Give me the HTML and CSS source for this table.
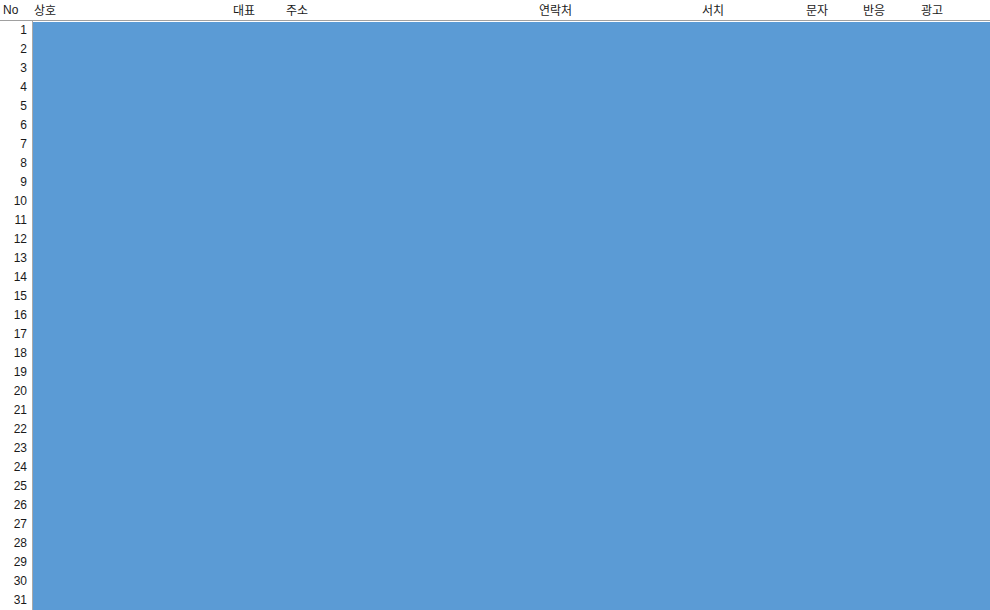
FILE: index.html
```html
<!DOCTYPE html>
<html lang="ko">
<head>
<meta charset="utf-8">
<link rel="stylesheet" href="styles.css">
</head>
<body>
<div class="sheet">
  <div class="head">
    <span class="h h-no">No</span>
    <span class="h h-name">상호</span>
    <span class="h h-rep">대표</span>
    <span class="h h-addr">주소</span>
    <span class="h h-tel">연락처</span>
    <span class="h h-search">서치</span>
    <span class="h h-sms">문자</span>
    <span class="h h-resp">반응</span>
    <span class="h h-ad">광고</span>
  </div>
  <div class="body">
    <div class="nums">
      <div class="num">1</div><div class="num">2</div><div class="num">3</div><div class="num">4</div>
      <div class="num">5</div><div class="num">6</div><div class="num">7</div><div class="num">8</div>
      <div class="num">9</div><div class="num">10</div><div class="num">11</div><div class="num">12</div>
      <div class="num">13</div><div class="num">14</div><div class="num">15</div><div class="num">16</div>
      <div class="num">17</div><div class="num">18</div><div class="num">19</div><div class="num">20</div>
      <div class="num">21</div><div class="num">22</div><div class="num">23</div><div class="num">24</div>
      <div class="num">25</div><div class="num">26</div><div class="num">27</div><div class="num">28</div>
      <div class="num">29</div><div class="num">30</div><div class="num">31</div>
    </div>
    <div class="fill"></div>
  </div>
</div>
</body>
</html>
```
FILE: styles.css
```css
html, body {
  margin: 0;
  padding: 0;
  background: #ffffff;
  overflow: hidden;
}
.sheet {
  width: 990px;
  height: 610px;
  display: flex;
  flex-direction: column;
  font-family: "Noto Sans CJK KR", "Noto Sans", sans-serif;
  font-size: 12px;
  color: #1a1a1a;
}
.head {
  height: 20px;
  border-bottom: 1px solid #a0a0a0;
  display: grid;
  grid-template-columns: 31px 199px 53px 253px 163px 104px 57px 58px 1fr;
  align-items: center;
  padding-left: 3px;
  box-sizing: content-box;
  flex: none;
}
.h {
  line-height: 20px;
  white-space: nowrap;
}
.h-no { font-family: "Liberation Sans", "Noto Sans", sans-serif; }
.body {
  flex: 1;
  display: flex;
  min-height: 0;
}
.nums {
  width: 32px;
  border-right: 1px solid #a9a9a9;
  flex: none;
  overflow: hidden;
}
.num {
  height: 19px;
  line-height: 19px;
  text-align: right;
  padding-right: 5px;
  font-family: "Liberation Sans", "Noto Sans", sans-serif;
  font-size: 12px;
}
.fill {
  flex: 1;
  background: #5b9bd5;
  border-top: 1px solid #ffffff;
}
```
